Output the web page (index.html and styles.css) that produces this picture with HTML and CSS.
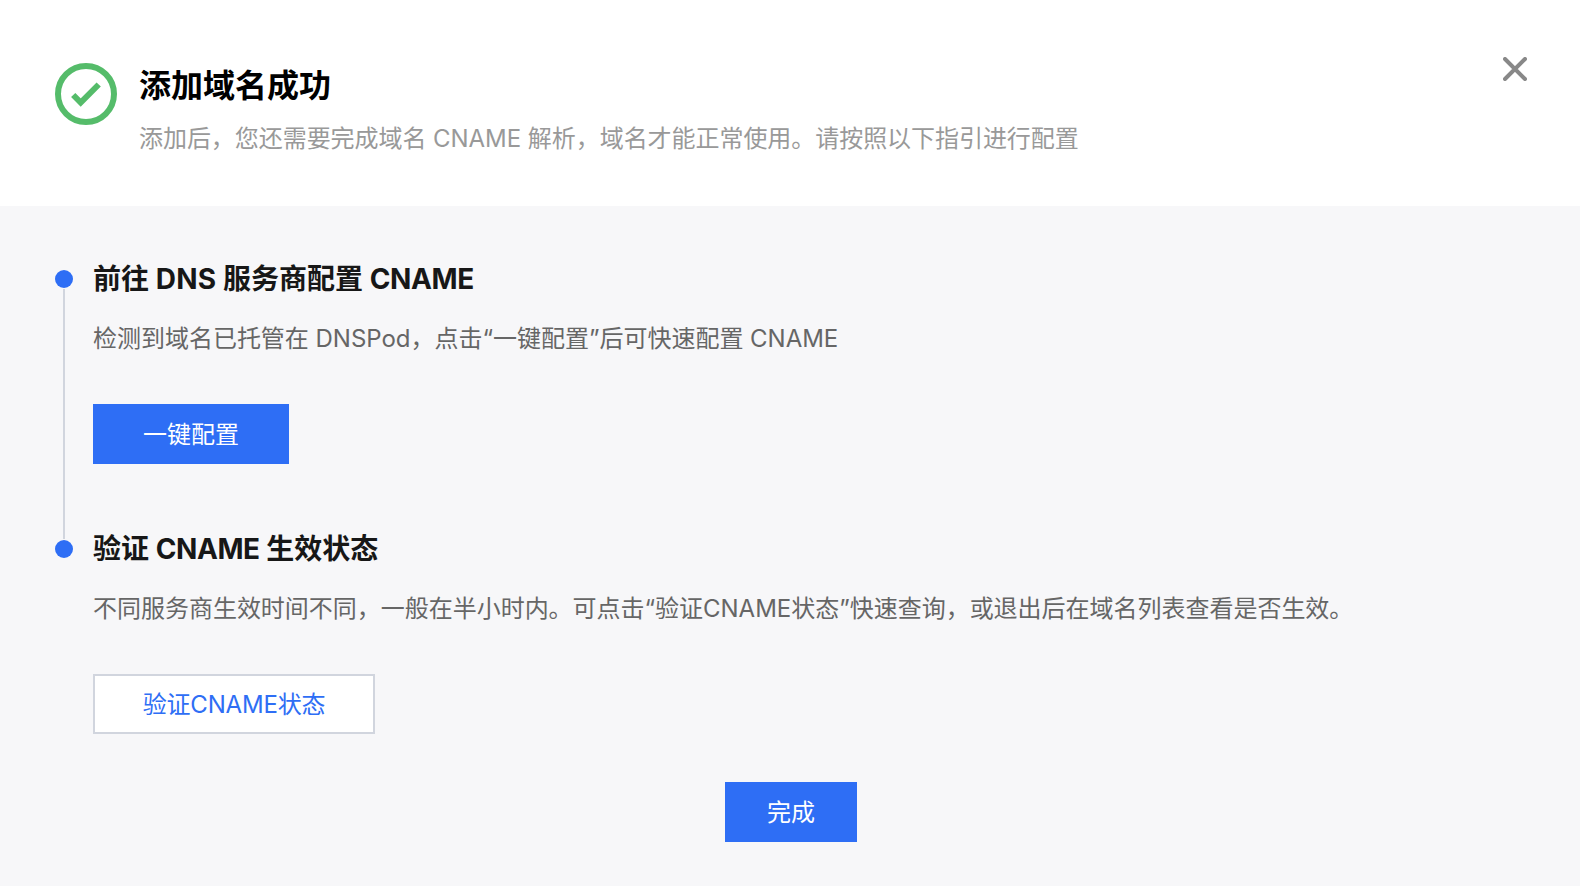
FILE: index.html
```html
<!DOCTYPE html>
<html lang="zh-CN">
<head>
<meta charset="utf-8">
<title>添加域名成功</title>
<link rel="stylesheet" href="styles.css">
</head>
<body>
<div class="dialog">
  <header class="head">
    <svg class="ok-icon" viewBox="0 0 62 62" width="62" height="62" aria-hidden="true">
      <circle cx="31" cy="31" r="28" fill="none" stroke="#55bc6a" stroke-width="6"/>
      <path d="M18.2 32 L25.7 39.5 L43.7 21.5" fill="none" stroke="#55bc6a" stroke-width="6"/>
    </svg>
    <div class="head-text">
      <h1 class="head-title">添加域名成功</h1>
      <p class="head-sub">添加后，您还需要完成域名 CNAME 解析，域名才能正常使用。请按照以下指引进行配置</p>
    </div>
    <button class="close" aria-label="关闭">
      <svg viewBox="0 0 24 24" width="24" height="24" aria-hidden="true">
        <path d="M2 2 L22 22 M22 2 L2 22" fill="none" stroke="#888888" stroke-width="4" stroke-linecap="round"/>
      </svg>
    </button>
  </header>
  <main class="body">
    <section class="step">
      <div class="rail"><span class="dot"></span><span class="connector"></span></div>
      <div class="step-main">
        <h2 class="step-title">前往 <span class="wide">DNS</span> 服务商配置 <span class="tight">CNAME</span></h2>
        <p class="step-desc">检测到域名已托管在 DNSPod，点击“一键配置”后可快速配置 CNAME</p>
        <button class="btn btn-primary btn-config">一键配置</button>
      </div>
    </section>
    <section class="step step-last">
      <div class="rail"><span class="dot"></span></div>
      <div class="step-main">
        <h2 class="step-title">验证 <span class="tight">CNAME</span> 生效状态</h2>
        <p class="step-desc">不同服务商生效时间不同，一般在半小时内。可点击“验证CNAME状态”快速查询，或退出后在域名列表查看是否生效。</p>
        <button class="btn btn-outline">验证CNAME状态</button>
      </div>
    </section>
    <div class="foot"><button class="btn btn-primary btn-done">完成</button></div>
  </main>
</div>
</body>
</html>
```
FILE: styles.css
```css
* { box-sizing: border-box; }
html, body { margin: 0; height: 100%; }
body {
  background: #f7f7f9;
  font-family: Inter, "Noto Sans CJK SC", sans-serif;
  overflow: hidden;
}
.dialog { display: flex; flex-direction: column; height: 886px; }
.head {
  height: 206px;
  background: #fff;
  display: flex;
  align-items: flex-start;
  padding: 63px 0 0 55px;
  position: relative;
}
.ok-icon { flex: none; display: block; }
.head-text { margin-left: 22px; }
.head-title {
  margin: 3px 0 0;
  font-size: 32px;
  line-height: 40px;
  font-weight: 700;
  color: #000;
}
.head-sub {
  margin: 15px 0 0;
  font-size: 24px;
  line-height: 36px;
  color: #999;
  letter-spacing: -0.05px;
}
.close {
  position: absolute;
  right: 53px;
  top: 57px;
  padding: 0;
  border: 0;
  background: none;
  display: block;
  line-height: 0;
}
.body { flex: 1; padding: 53px 0 0; display: flex; flex-direction: column; }
.step { display: flex; height: 270px; padding-left: 55px; }
.step-last { height: 253px; }
.rail { width: 18px; flex: none; display: flex; flex-direction: column; align-items: center; }
.dot { width: 18px; height: 18px; border-radius: 50%; background: #2e6ef5; margin-top: 11px; flex: none; }
.connector { width: 2px; flex: 1; background: #d1d5de; margin: 1px 0 -10px; }
.step-main { margin-left: 20px; }
.step-title {
  margin: 0;
  font-size: 28px;
  line-height: 40px;
  font-weight: 700;
  color: #171717;
}
.wide { letter-spacing: 0.3px; }
.tight { letter-spacing: -0.4px; }
.step-desc {
  margin: 20px 0 0;
  font-size: 24px;
  line-height: 40px;
  color: #666;
  white-space: nowrap;
  letter-spacing: -0.02px;
}
.btn {
  display: block;
  height: 60px;
  margin: 0;
  padding: 2px 0 0;
  font-family: inherit;
  font-size: 24px;
  line-height: 1;
  border-radius: 0;
}
.step-main .btn { margin-top: 45px; }
.btn-primary { background: #2e6ef5; color: #fff; border: 0; }
.btn-config { width: 196px; }
.btn-outline { width: 282px; background: #fff; color: #2e6ef5; border: 2px solid #d1d5de; letter-spacing: -0.2px; }
.foot { display: flex; justify-content: center; padding-left: 2px; }
.btn-done { width: 132px; }
```
